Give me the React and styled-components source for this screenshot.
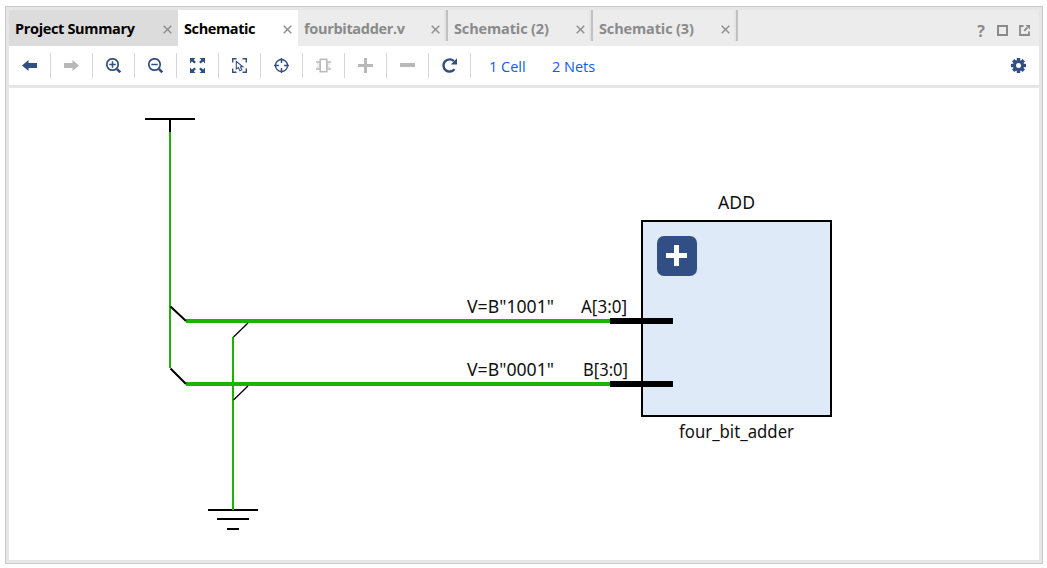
import React from "react";
import styled, { createGlobalStyle } from "styled-components";

const NAVY = "#324f85";
const GREEN = "#1bb404";

const GlobalStyle = createGlobalStyle`
  * { box-sizing: border-box; }
  body { margin: 0; background: #fff; font-family: "Open Sans", "Noto Sans", sans-serif; }
`;

const Page = styled.div`
  width: 1047px;
  height: 568px;
  padding: 6px 4px 4px 5px;
  overflow: hidden;
`;

const Frame = styled.div`
  display: flex;
  flex-direction: column;
  width: 1038px;
  height: 558px;
  padding: 3px;
  border: 1px solid #cacaca;
  background: #e6e6e6;
`;

const TabBar = styled.div`
  display: flex;
  height: 36px;
  flex: none;
  background: #ececec;
`;

const TabItem = styled.div`
  display: flex;
  align-items: center;
  justify-content: space-between;
  width: ${(p) => p.$width}px;
  padding: 0 ${(p) => p.$end ?? 6}px 0 6px;
  background: ${(p) => p.$bg || "transparent"};
  color: ${(p) => p.$color || "#8a8a8a"};
`;

const TabLabel = styled.span`
  font-size: 14.5px;
  font-weight: 700;
  line-height: 20px;
  white-space: nowrap;
  letter-spacing: ${(p) => p.$spacing || 0}px;
  margin-top: 2px;
`;

const TabDivider = styled.div`
  width: 4px;
  height: 31px;
  border-left: 2px solid #e4e4e4;
  border-right: 2px solid #c0c0c0;
`;

const CloseIcon = styled.svg`
  flex: none;
  margin-top: 2px;
`;

const WindowActions = styled.div`
  display: flex;
  align-items: center;
  margin-left: auto;
  gap: 11px;
  padding: 5px 9px 0 0;
`;

const HelpMark = styled.span`
  width: 10px;
  font-size: 16px;
  line-height: 16px;
  font-weight: 700;
  text-align: center;
  color: #8a8a8a;
`;

const Toolbar = styled.div`
  display: flex;
  align-items: center;
  flex: none;
  height: 39px;
  background: #fff;
`;

const ToolButton = styled.div`
  display: flex;
  align-items: center;
  justify-content: center;
  width: 42px;
  height: 25px;
  border-right: 1px solid #d6d6d6;
  color: ${(p) => (p.$disabled ? "#b8b8b8" : NAVY)};
`;

const CountLink = styled.span`
  width: ${(p) => p.$width}px;
  margin-left: ${(p) => p.$gap}px;
  padding-top: 3px;
  font-size: 14.5px;
  line-height: 20px;
  white-space: nowrap;
  color: #0a5cf5;
`;

const Settings = styled.div`
  display: flex;
  margin-left: auto;
  padding-right: 13px;
`;

const Canvas = styled.div`
  flex: 1;
  margin-top: 3px;
  background: #fff;
`;

const Drawing = styled.svg`
  display: block;
`;

const NetText = styled.text`
  font-family: "Noto Sans", "Open Sans", sans-serif;
  font-size: 17.6px;
  fill: #111;
`;

const Close = () => (
  <CloseIcon width="9" height="9" viewBox="0 0 9 9">
    <path d="M.7 .7 8.3 8.3M8.3 .7 .7 8.3" stroke="#8c8c8c" strokeWidth="1.4" />
  </CloseIcon>
);

const Icon = ({ children }) => (
  <svg width="15" height="15" viewBox=".5 .5 15 15" fill="none" stroke="currentColor">
    {children}
  </svg>
);

const Arrow = ({ flip }) => (
  <Icon>
    <path
      transform={flip ? "translate(16 0) scale(-1 1)" : undefined}
      d="M.5 8 7 2.5V5.500H15.500V10.500H7V13.500Z"
      fill="currentColor"
      stroke="none"
    />
  </Icon>
);

const Magnifier = ({ plus }) => (
  <Icon>
    <circle cx="7" cy="7" r="5.7" strokeWidth="1.7" />
    <path d={plus ? "M7 3.800v6.400M3.800 7h6.400" : "M3.800 7h6.400"} strokeWidth="1.5" />
    <path d="M11.300 11.300 14.800 14.800" strokeWidth="2.6" />
  </Icon>
);

const Fit = () => (
  <Icon>
    <path
      d="M.5 .5H6L4.3 2.3 6.4 4.4 4.9 5.900 2.4 4.1.5 6ZM15.5 .5V6L13.7 4.1 11.1 5.900 9.6 4.4 11.8 2.3 10 .5ZM.5 15.5V10L2.4 11.9 4.9 10.100 6.4 11.6 4.3 13.7 6 15.5ZM15.5 15.5H10L11.8 13.7 9.6 11.6 11.1 10.100 13.7 11.9 15.5 10Z"
      fill="currentColor"
      stroke="none"
    />
  </Icon>
);

const SelectArea = () => (
  <Icon>
    <path d="M1.200 5V1.200H5M11 1.200H14.800V5M14.800 11V14.800H11M5 14.800H1.200V11" strokeWidth="1.4" />
    <path d="M4.800 3.800V11.500L6.800 10 8.400 13.300 10.300 12.300 8.900 9.300H11.400Z" strokeWidth="1.1" />
  </Icon>
);

const Crosshair = () => (
  <Icon>
    <circle cx="8" cy="8" r="6" strokeWidth="1.4" />
    <path d="M8 .4V5.4M8 10.6V15.6M.4 8H5.4M10.6 8H15.6" strokeWidth="1.5" />
  </Icon>
);

const Chip = () => (
  <Icon>
    <rect x="4.7" y="1.8" width="6.6" height="12.4" strokeWidth="1.5" />
    <path d="M.5 4.500H4.500M.5 11.500H4.500M11.500 4.500H15.500M11.500 11.500H15.500" strokeWidth="1.3" />
    <path d="M1.500 6.500H4V9.500H1.500M14.500 6.500H12V9.500H14.500" strokeWidth=".6" />
  </Icon>
);

const Reload = () => (
  <Icon>
    <path d="M13 11.600A6.100 6.100 0 1 1 12.400 3.700" strokeWidth="2.4" />
    <path d="M15.500 .8V7H9.300Z" fill="currentColor" stroke="none" />
  </Icon>
);

const Gear = () => (
  <svg width="15" height="15" viewBox="-7.5 -7.5 15 15">
    <g fill={NAVY}>
      {[0, 45, 90, 135].map((a) => (
        <rect key={a} x="-1.7" y="-7.5" width="3.4" height="15" transform={`rotate(${a})`} />
      ))}
      <circle r="5.6" />
    </g>
    <circle r="2.5" fill="#fff" />
  </svg>
);

const tools = [
  { id: "back", icon: <Arrow /> },
  { id: "forward", icon: <Arrow flip />, disabled: true },
  { id: "zoomIn", icon: <Magnifier plus /> },
  { id: "zoomOut", icon: <Magnifier /> },
  { id: "fit", icon: <Fit /> },
  { id: "select", icon: <SelectArea /> },
  { id: "center", icon: <Crosshair /> },
  { id: "chip", icon: <Chip />, disabled: true },
  { id: "expand", icon: <Icon><path d="M8 .5V15.5M.5 8H15.5" strokeWidth="3" /></Icon>, disabled: true },
  { id: "collapse", icon: <Icon><path d="M.5 7.500H15.500" strokeWidth="4" /></Icon>, disabled: true },
  { id: "reload", icon: <Reload /> },
];

const Label = ({ x, y, w, children }) => (
  <NetText x={x} y={y} textLength={w} lengthAdjust="spacingAndGlyphs">{children}</NetText>
);

const Schematic = () => (
  <Drawing width="1030" height="472" viewBox="9 88 1030 472">
    <rect x="642" y="221" width="189" height="195" fill="#deeaf8" stroke="#000" strokeWidth="2" />
    <g fill="none" stroke={GREEN} strokeWidth="2">
      <path d="M170 132V368M233 337V509" />
      <path d="M186 321H610M186 384H610" strokeWidth="4" />
    </g>
    <g fill="none" stroke="#000" strokeWidth="2">
      <path d="M145 119H195M170 119V132" />
      <path d="M170.500 306.500 186 321M170.500 368.500 186 384" />
      <path d="M233.500 337 248 323M233.500 400 248 386" strokeWidth="1.3" />
      <path d="M208 510H258M217 519H249M227 529H239" />
      <path d="M610 321H673M610 384H673" strokeWidth="6" />
    </g>
    <path d="M233 508V510" stroke={GREEN} strokeWidth="2" />
    <rect x="657" y="236" width="40" height="40" rx="7" fill={NAVY} />
    <path d="M676.500 245V266M666 255.500H687" stroke="#fff" strokeWidth="5" />
    <Label x="718" y="209" w="37">ADD</Label>
    <Label x="679" y="438" w="115">four_bit_adder</Label>
    <Label x="467" y="313" w="87">V=B"1001"</Label>
    <Label x="467" y="376" w="87">V=B"0001"</Label>
    <Label x="581" y="313" w="46">A[3:0]</Label>
    <Label x="583" y="376" w="45">B[3:0]</Label>
  </Drawing>
);

export default function App() {
  return (
    <Page>
      <GlobalStyle />
      <Frame>
        <TabBar>
          <TabItem $width={169} $bg="#dcdcdc" $color="#000">
            <TabLabel $spacing={-0.34}>Project Summary</TabLabel>
            <Close />
          </TabItem>
          <TabItem $width={120} $bg="#fff" $color="#000">
            <TabLabel $spacing={-0.4}>Schematic</TabLabel>
            <Close />
          </TabItem>
          <TabItem $width={146} $end={4}>
            <TabLabel $spacing={-0.32}>fourbitadder.v</TabLabel>
            <Close />
          </TabItem>
          <TabDivider />
          <TabItem $width={141} $end={4}>
            <TabLabel $spacing={-0.14}>Schematic (2)</TabLabel>
            <Close />
          </TabItem>
          <TabDivider />
          <TabItem $width={141} $end={4}>
            <TabLabel $spacing={-0.14}>Schematic (3)</TabLabel>
            <Close />
          </TabItem>
          <TabDivider />
          <WindowActions>
            <HelpMark>?</HelpMark>
            <svg width="11" height="11" viewBox="0 0 11 11">
              <rect x="1" y="1" width="9" height="9" fill="none" stroke="#8a8a8a" strokeWidth="2" />
            </svg>
            <svg width="11" height="11" viewBox="0 0 11 11" fill="none" stroke="#8a8a8a" strokeWidth="1.8">
              <path d="M4.500 1H1V10H10V6.500M5.200 5.800 8.500 2.500" />
              <path d="M6.500 0H11V4.500Z" fill="#8a8a8a" stroke="none" />
            </svg>
          </WindowActions>
        </TabBar>
        <Toolbar>
          {tools.map((t) => (
            <ToolButton key={t.id} $disabled={t.disabled}>{t.icon}</ToolButton>
          ))}
          <CountLink $gap={18} $width={37}>1 Cell</CountLink>
          <CountLink $gap={26} $width={43}>2 Nets</CountLink>
          <Settings><Gear /></Settings>
        </Toolbar>
        <Canvas>
          <Schematic />
        </Canvas>
      </Frame>
    </Page>
  );
}
